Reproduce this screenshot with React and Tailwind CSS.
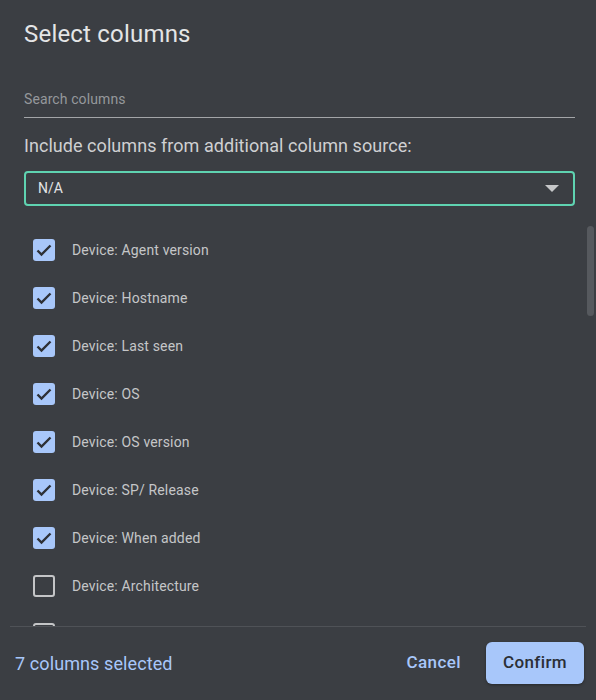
import React from "react";

const columns = [
  { label: "Device: Agent version", checked: true },
  { label: "Device: Hostname", checked: true },
  { label: "Device: Last seen", checked: true },
  { label: "Device: OS", checked: true },
  { label: "Device: OS version", checked: true },
  { label: "Device: SP/ Release", checked: true },
  { label: "Device: When added", checked: true },
  { label: "Device: Architecture", checked: false },
  { label: "", checked: false },
];

const Checkbox = ({ checked }) =>
  checked ? (
    <div className="w-[22px] h-[22px] rounded-[3px] bg-[#a8c7fa]">
      <svg width="22" height="22" viewBox="0 0 22 22">
        <path d="M4.5 11.5l4 4L17.5 6.5" fill="none" stroke="#2d3036" strokeWidth="2.4" />
      </svg>
    </div>
  ) : (
    <div className="w-[22px] h-[22px] rounded-[3px] border-2 border-[#c4c5c7]" />
  );

const App = () => {
  return (
    <div
      className="w-[596px] h-[700px] bg-[#3b3e43] flex flex-col overflow-hidden"
      style={{ fontFamily: "Roboto, 'Liberation Sans', sans-serif" }}
    >
      <div className="pl-6 pr-[21px] pt-[19px]">
        <h2 className="text-[24px] leading-[30px] text-[#e4e5e6] tracking-[0.2px]">Select columns</h2>

        <div className="mt-[41px] border-b border-[#a3a5a8] pb-[9px]">
          <div className="text-[14px] leading-[18px] text-[#95989c] tracking-[0.1px]">Search columns</div>
        </div>

        <div className="mt-[16px] text-[18px] leading-[24px] text-[#cfd0d2] tracking-[0.05px]">
          Include columns from additional column source:
        </div>

        <div className="mt-[13px] h-[35px] rounded-[4px] border-2 border-[#5fd3b1] flex items-center justify-between pl-3 pr-[14px]">
          <span className="text-[14px] text-[#e2e3e4]">N/A</span>
          <svg width="14" height="8" viewBox="0 0 14 8">
            <path d="M0 0h14L7 7z" fill="#c6c7c9" />
          </svg>
        </div>
      </div>

      <div className="relative mt-[20px] h-[400px] overflow-hidden">
        <div className="flex flex-col">
          {columns.map((c, i) => (
            <div key={i} className="h-[48px] flex items-center pl-[33px]">
              <Checkbox checked={c.checked} />
              {c.label && (
                <span className="ml-[17px] text-[14px] text-[#c5c6c8] tracking-[0.15px]">{c.label}</span>
              )}
            </div>
          ))}
        </div>
        <div className="absolute right-[2px] top-0 w-[7px] h-[90px] rounded-full bg-[#56595e]" />
      </div>

      <div className="mx-[10px] border-t border-[#4f5257]" />

      <div className="flex items-center justify-between pl-[15px] pr-3 pt-[15px]">
        <span className="text-[18px] text-[#a8c7fa] tracking-[0.1px]">7 columns selected</span>
        <div className="flex items-center gap-[25px]">
          <button className="text-[17px] font-medium text-[#a8c7fa] tracking-[0.4px]">Cancel</button>
          <button className="w-[98px] h-[42px] rounded-[6px] bg-[#a8c7fa] text-[17px] font-medium text-[#2b2f36] tracking-[0.4px] shadow-[0_1px_3px_rgba(0,0,0,0.35)]">
            Confirm
          </button>
        </div>
      </div>
    </div>
  );
};

export default App;
